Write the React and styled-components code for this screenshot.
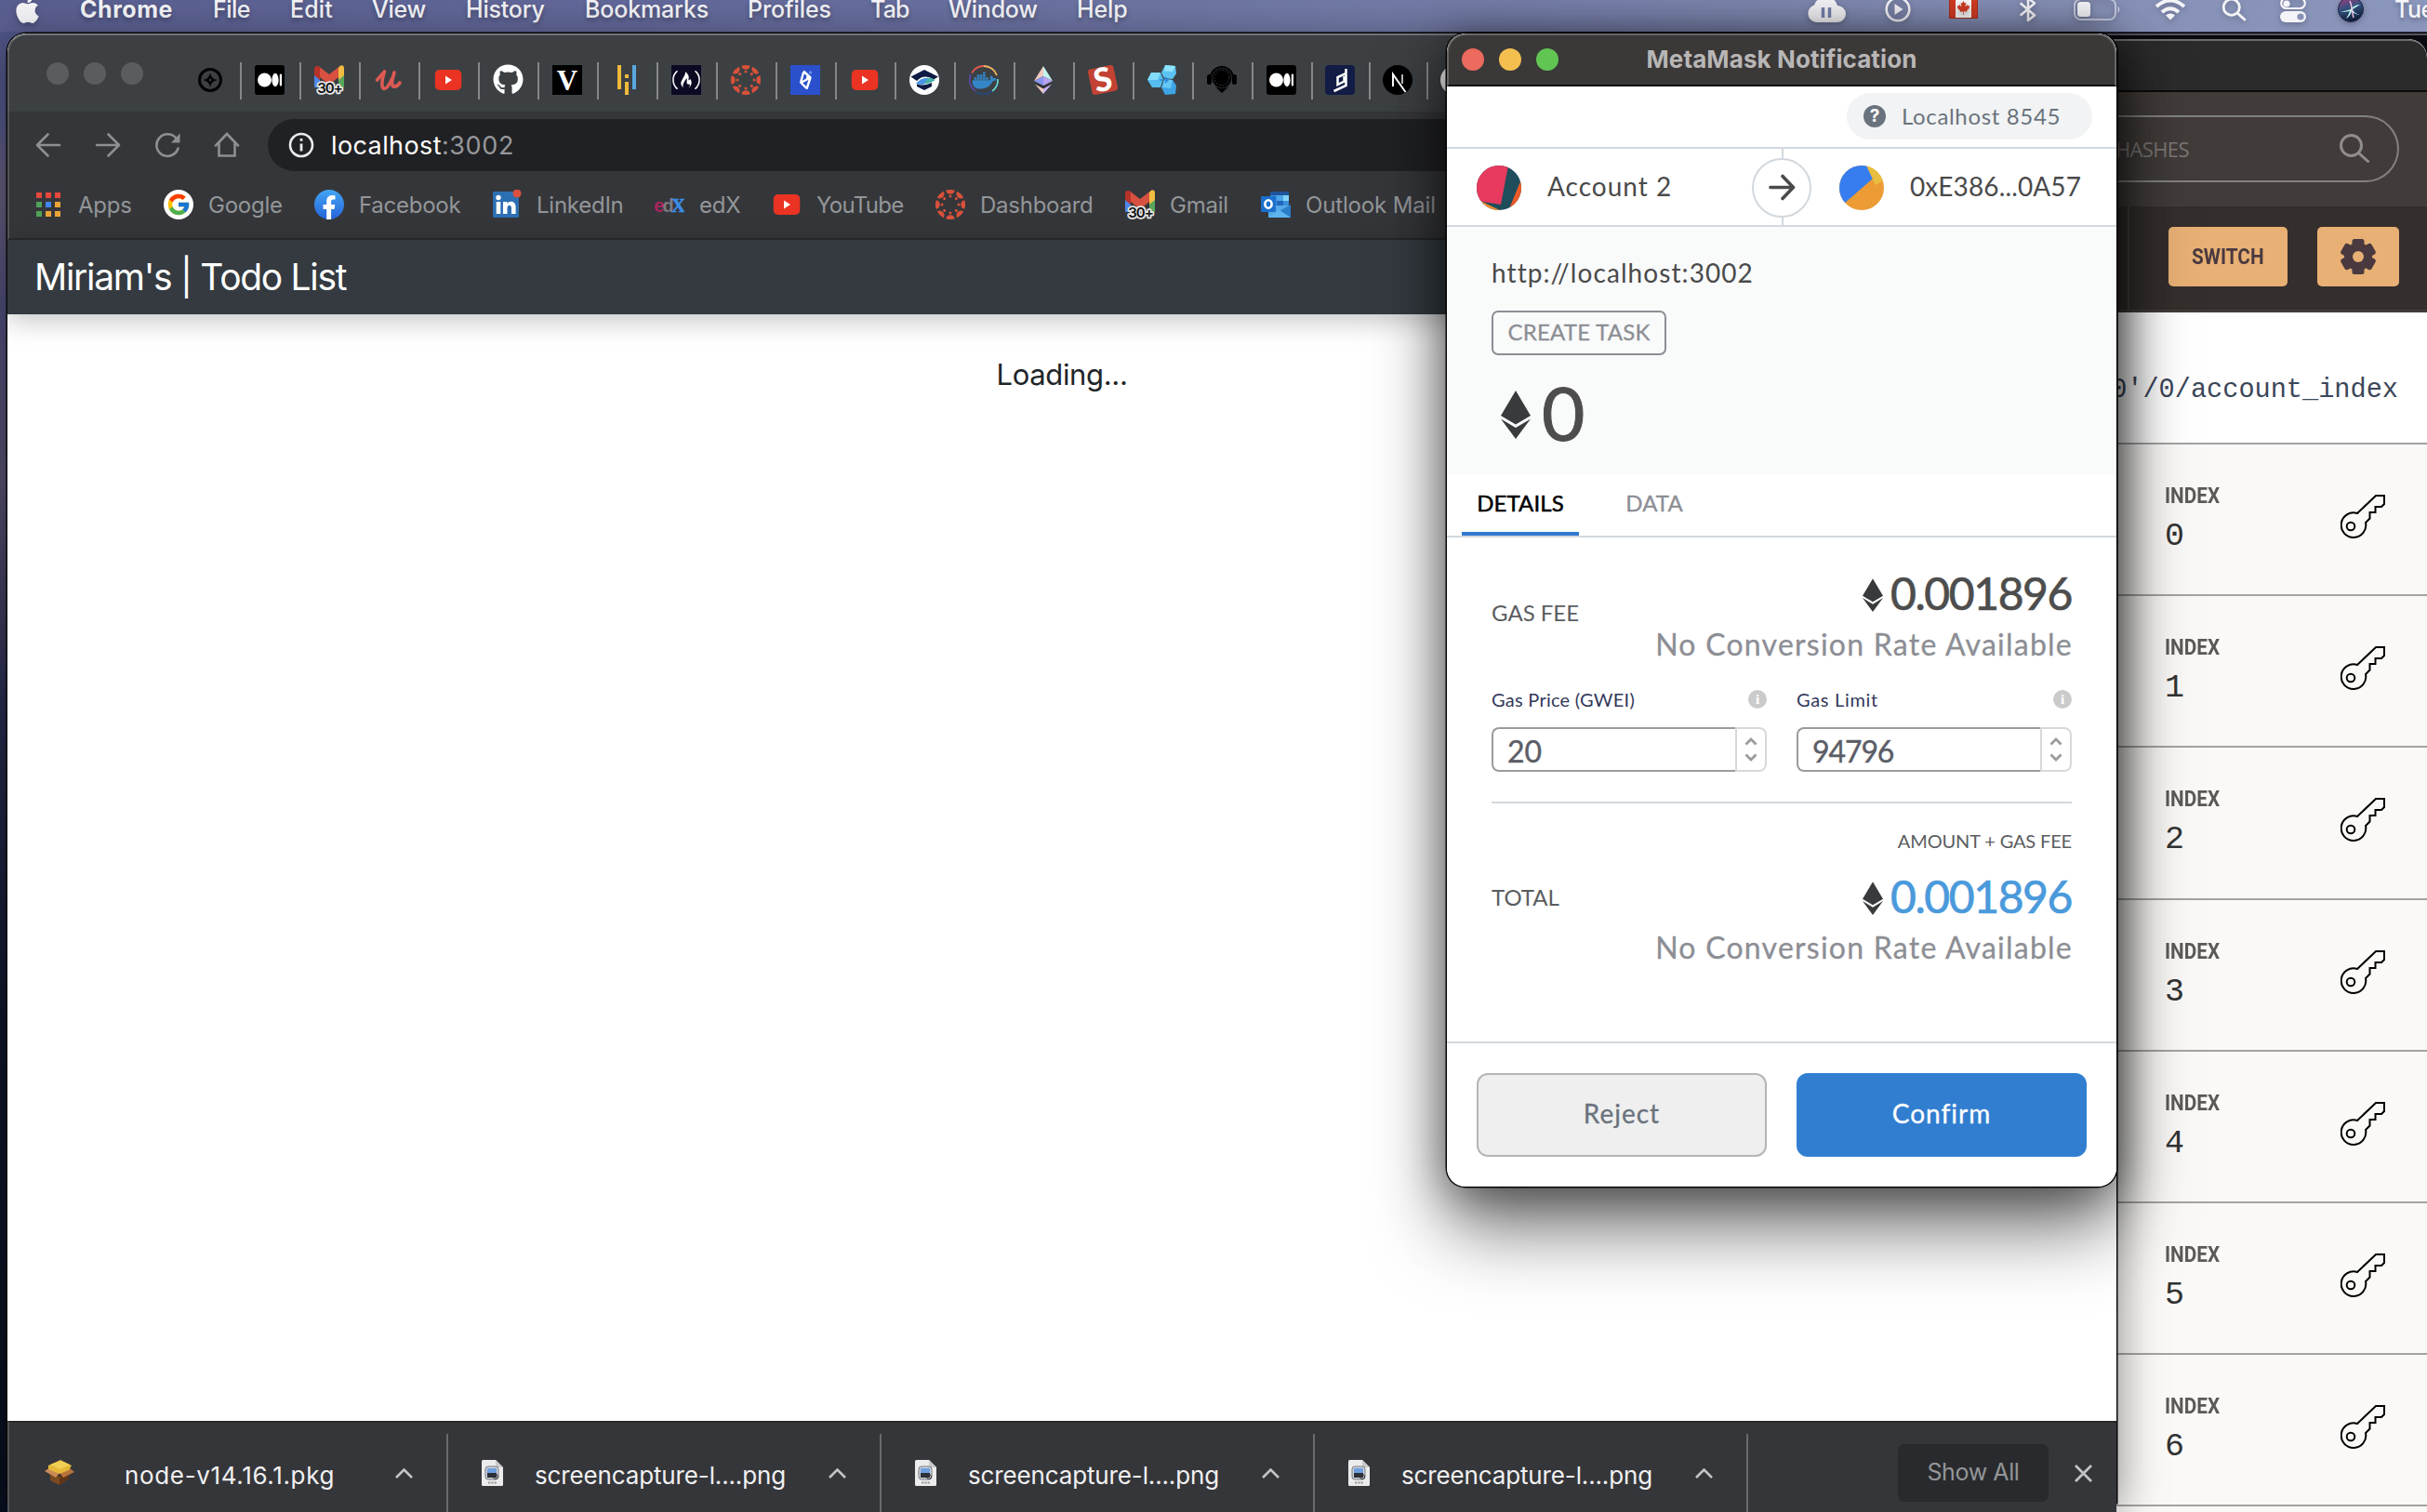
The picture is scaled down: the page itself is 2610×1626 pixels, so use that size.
import React from "react";
import styled, { createGlobalStyle } from "styled-components";
import { FaApple, FaGithub, FaFreeCodeCamp, FaDocker, FaCanadianMapleLeaf } from "react-icons/fa";
import { FcGoogle } from "react-icons/fc";

const UI = `"Inter", "Liberation Sans", sans-serif`;
const EUCLID = `"Lato", "Open Sans", sans-serif`;

const GlobalStyle = createGlobalStyle`
  * { box-sizing: border-box; }
  html, body { margin: 0; overflow: hidden; }
  body { font-family: ${UI}; width: 2610px; height: 1626px; }
  svg { display: block; flex: none; }
`;

/* ---------- Desktop ---------- */
const Desktop = styled.div`
  position: relative;
  width: 2610px;
  height: 1626px;
  overflow: hidden;
  background: linear-gradient(180deg, #4d5486 0, #565a8c 130px, #6a6080 200px, #50507e 330px, #5b5273 520px, #2a2d50 760px, #10162c 1100px, #0a0f20 1626px);
`;
const BackWindow = styled.div`
  position: absolute;
  left: 2200px;
  top: 36px;
  width: 420px;
  height: 1590px;
  background: #0a0a10;
  border-top: 2px solid #55565c;
  box-shadow: 0 0 0 1.5px #08080c;
`;

/* ---------- Menu bar ---------- */
const MenuBar = styled.div`
  position: relative;
  display: flex;
  align-items: center;
  height: 34px;
  padding: 0 0 14px 13px;
  background: linear-gradient(90deg, #5a5f91 0, #646a9b 30%, #737ba7 58%, #8791b7 85%, #8b96bc 100%);
  color: #f4f4f8;
  white-space: nowrap;
`;
const MenuLogo = styled.div`
  width: 73px;
  flex: none;
  svg { filter: drop-shadow(0 3px 3px rgba(0, 0, 0, 0.25)); }
`;
const MenuItem = styled.span`
  flex: none;
  width: ${(p) => p.$width}px;
  font-size: 25px;
  line-height: 20px;
  font-weight: ${(p) => (p.$bold ? 700 : 500)};
  letter-spacing: ${(p) => p.$spacing || 0}px;
  text-shadow: 0 3px 5px rgba(0, 0, 0, 0.3);
`;
const StatusArea = styled.div`
  display: flex;
  align-items: center;
  margin-left: auto;
`;
const StatusSlot = styled.div`
  flex: none;
  width: ${(p) => p.$width}px;
  svg { overflow: visible; filter: drop-shadow(0 2px 3px rgba(0, 0, 0, 0.25)); }
`;
const Flag = styled.div`
  display: flex;
  align-items: center;
  justify-content: center;
  width: 31px;
  height: 24px;
  margin-bottom: 4px;
  color: #d13c23;
  border: 1px solid #a52f1c;
  background: linear-gradient(90deg, #d13c23 0 6px, #fff 6px 23px, #d13c23 23px);
`;

/* ---------- Browser window ---------- */
const Browser = styled.div`
  position: absolute;
  left: 8px;
  top: 36px;
  width: 2268px;
  height: 1590px;
  display: flex;
  flex-direction: column;
  border-radius: 20px 20px 0 0;
  overflow: hidden;
  background: #fff;
`;
const BrowserShadow = styled.div`
  position: absolute;
  left: 8px;
  top: 36px;
  width: 2268px;
  height: 1580px;
  border-radius: 20px 20px 0 0;
  box-shadow: 0 0 0 1.5px #0a0a0c, 0 12px 50px rgba(0, 0, 0, 0.5);
`;
const TabStrip = styled.div`
  display: flex;
  align-items: center;
  flex: none;
  height: 84px;
  padding-left: 40px;
  background: #3c4043;
  border-top: 2px solid #727476;
  border-left: 2px solid #5a5c5e;
  border-radius: 20px 0 0 0;
`;
const Lights = styled.div`
  display: flex;
  gap: 16px;
`;
const Light = styled.i`
  width: 24px;
  height: 24px;
  border-radius: 50%;
  background: ${(p) => p.$color};
`;
const Tabs = styled.div`
  display: flex;
  margin: 15px 0 0 42px;
`;
const Tab = styled.div`
  display: flex;
  align-items: center;
  justify-content: center;
  width: ${(p) => p.$width || 64}px;
  height: 40px;
  padding-right: 2px;
  border-right: 2px solid #85888a;
  svg { margin-top: -2px; }
`;
const Toolbar = styled.div`
  flex: none;
  height: 138px;
  background: #35363a;
  border-left: 2px solid #535458;
  border-bottom: 2px solid #28292b;
`;
const NavRow = styled.div`
  display: flex;
  align-items: center;
  height: 72px;
  padding-left: 10px;
`;
const NavButton = styled.div`
  display: flex;
  justify-content: center;
  width: 64px;
  flex: none;
`;
const Omnibox = styled.div`
  display: flex;
  align-items: center;
  flex: 1;
  height: 56px;
  margin: 0 24px 0 12px;
  padding-left: 22px;
  border-radius: 28px;
  background: #202124;
  color: #fff;
  font-size: 27px;
  letter-spacing: 0.4px;
  svg { margin-right: 18px; }
`;
const Port = styled.span`
  color: #96989b;
  letter-spacing: 0.6px;
`;
const BookmarkRow = styled.div`
  display: flex;
  align-items: center;
  height: 56px;
  padding-left: 26px;
`;
const Bookmark = styled.div`
  display: flex;
  align-items: center;
  flex: none;
  gap: 16px;
  width: ${(p) => p.$width}px;
  color: #939699;
  font-size: 24px;
  letter-spacing: ${(p) => p.$spacing || -0.25}px;
  white-space: nowrap;
`;
const AppsGrid = styled.div`
  display: grid;
  grid-template-columns: repeat(3, 6px);
  gap: 4px;
  width: 32px;
  padding-left: 3px;
`;
const AppsDot = styled.i`
  height: 6px;
  background: ${(p) => p.$color};
`;
const SiteHeader = styled.div`
  flex: none;
  height: 80px;
  padding-left: 29px;
  background: #343a40;
  color: #fff;
  font-size: 39px;
  line-height: 80px;
  letter-spacing: -1.3px;
  box-shadow: 0 8px 28px rgba(0, 0, 0, 0.22);
  position: relative;
`;
const SiteBody = styled.div`
  flex: 1;
  padding-top: 41px;
  text-align: center;
  color: #212529;
  font-size: 31px;
  line-height: 48px;
  letter-spacing: -0.35px;
`;
const Shelf = styled.div`
  display: flex;
  flex: none;
  height: 98px;
  padding-top: 12px;
  border-top: 2px solid #28292b;
  border-left: 2px solid #535458;
  background: #35363a;
`;
const Download = styled.div`
  display: flex;
  align-items: center;
  flex: none;
  width: ${(p) => p.$width}px;
  padding: 0 36px 0 ${(p) => p.$pad}px;
  border-right: 2px solid #6a6b6e;
`;
const FileName = styled.span`
  margin: 5px auto 0 ${(p) => p.$gap}px;
  color: #f1f1f2;
  font-size: 26px;
  letter-spacing: ${(p) => p.$spacing}px;
  white-space: nowrap;
`;
const ShelfEnd = styled.div`
  display: flex;
  align-items: center;
  gap: 28px;
  margin-left: auto;
  padding-right: 26px;
`;
const ShowAll = styled.div`
  width: 162px;
  height: 62px;
  border-radius: 7px;
  background: #292a2d;
  color: #939699;
  font-size: 25px;
  line-height: 60px;
  letter-spacing: -0.4px;
  text-align: center;
`;

/* ---------- Wallet popup ---------- */
const Popup = styled.div`
  position: absolute;
  left: 1556px;
  top: 36px;
  width: 720px;
  height: 1240px;
  display: flex;
  flex-direction: column;
  overflow: hidden;
  border-radius: 20px;
  background: #fff;
  font-family: ${EUCLID};
`;
const PopupShadow = styled.div`
  position: absolute;
  left: 1556px;
  top: 36px;
  width: 720px;
  height: 1240px;
  border-radius: 20px;
  box-shadow: 0 0 0 1.5px #050505, 0 44px 80px rgba(0, 0, 0, 0.56), 0 6px 48px rgba(0, 0, 0, 0.42);
`;
const PopupTitleBar = styled.div`
  display: grid;
  grid-template-columns: 1fr auto 1fr;
  align-items: center;
  flex: none;
  height: 57px;
  padding: 0 14px 1px;
  background: #3b3838;
  border: 2px solid #6a6767;
  border-bottom: 2px solid #0f0f0f;
  border-radius: 20px 20px 0 0;
`;
const PopupTitle = styled.div`
  padding-bottom: 2px;
  color: #b8b6b6;
  font: 700 26px ${UI};
  letter-spacing: 0.1px;
`;
const NetworkBar = styled.div`
  display: flex;
  align-items: center;
  justify-content: flex-end;
  flex: none;
  height: 67px;
  padding: 0 26px 1px 0;
  border-bottom: 2px solid #d2d8dd;
`;
const Network = styled.div`
  display: flex;
  align-items: center;
  gap: 17px;
  width: 264px;
  height: 50px;
  padding: 0 0 1px 18px;
  border-radius: 25px;
  background: #f2f3f4;
  color: #6a737d;
  font-size: 24px;
  letter-spacing: 0.65px;
`;
const RoundBadge = styled.span`
  display: grid;
  place-items: center;
  width: ${(p) => p.$size}px;
  height: ${(p) => p.$size}px;
  border-radius: 50%;
  background: ${(p) => p.$bg};
  color: #fff;
  font: 700 ${(p) => p.$font}px/1 ${(p) => p.$family || UI};
  letter-spacing: 0;
`;
const Accounts = styled.div`
  position: relative;
  display: grid;
  grid-template-columns: 1fr 1fr;
  flex: none;
  height: 84px;
  border-bottom: 2px solid #d2d8dd;
`;
const Account = styled.div`
  display: flex;
  align-items: center;
  gap: 28px;
  padding: 2px 0 0 ${(p) => p.$pad}px;
  border-left: ${(p) => (p.$divided ? "2px solid #d2d8dd" : "0")};
  color: #4a4a4a;
  font-size: 28px;
  letter-spacing: ${(p) => p.$spacing}px;
`;
const AccountName = styled.span`
  padding-bottom: 4px;
`;
const ArrowBadge = styled.div`
  position: absolute;
  left: 328px;
  top: 10px;
  display: grid;
  place-items: center;
  width: 64px;
  height: 64px;
  border: 2px solid #d2d8dd;
  border-radius: 50%;
  background: #fff;
`;
const Summary = styled.div`
  flex: none;
  height: 266px;
  padding: 32px 48px 0;
  background: #f9fafa;
`;
const Origin = styled.div`
  color: #4a4a4a;
  font-size: 28px;
  line-height: 34px;
  letter-spacing: 1.08px;
  font-variant-ligatures: none;
`;
const Action = styled.div`
  width: 188px;
  height: 48px;
  margin-top: 24px;
  border: 2px solid #8c8e94;
  border-radius: 7px;
  color: #8c8e94;
  font-size: 24px;
  line-height: 42px;
  letter-spacing: 0.22px;
  text-align: center;
  -webkit-text-stroke: 0.3px #8c8e94;
`;
const BigAmount = styled.div`
  display: flex;
  align-items: center;
  gap: 12px;
  height: 70px;
  margin-top: 26px;
  padding-left: 10px;
  color: #4d4d4d;
  font-size: 80px;
  line-height: 70px;
  -webkit-text-stroke: 1px #4d4d4d;
  svg { margin-top: 6px; }
`;
const TabBar = styled.div`
  display: flex;
  flex: none;
  height: 68px;
  padding-left: 16px;
  border-bottom: 2px solid #d2d8dd;
`;
const PopupTab = styled.div`
  width: ${(p) => p.$width}px;
  border-bottom: 4px solid ${(p) => (p.$active ? "#3179d0" : "transparent")};
  color: ${(p) => (p.$active ? "#000" : "#8c8e94")};
  -webkit-text-stroke: ${(p) => (p.$active ? "0.5px #000" : "0.3px #8c8e94")};
  font-size: 24px;
  line-height: 62px;
  letter-spacing: 0.1px;
  text-align: center;
`;
const Details = styled.div`
  flex: 1;
  padding: 31px 48px 0;
`;
const FeeRow = styled.div`
  display: flex;
  justify-content: space-between;
  margin-top: ${(p) => p.$top || 0}px;
`;
const FeeLabel = styled.div`
  margin-top: ${(p) => p.$top}px;
  color: #5b5d5f;
  font-size: 24px;
  line-height: 30px;
`;
const FeeValues = styled.div`
  display: flex;
  flex-direction: column;
  align-items: flex-end;
`;
const Fee = styled.div`
  display: flex;
  align-items: center;
  gap: 8px;
  height: 56px;
  padding-top: 2px;
  color: ${(p) => p.$color};
  font-size: 48px;
  line-height: 56px;
  letter-spacing: -1.4px;
  -webkit-text-stroke: 0.7px ${(p) => p.$color};
  svg { margin-top: 3px; }
`;
const Conversion = styled.div`
  height: 40px;
  margin-top: 6px;
  color: #8c8e94;
  font-size: 32px;
  line-height: 43px;
  letter-spacing: 1.24px;
  margin-right: -1px;
  -webkit-text-stroke: 0.3px #8c8e94;
`;
const Fields = styled.div`
  display: grid;
  grid-template-columns: 1fr 1fr;
  gap: 32px;
  margin-top: 29px;
  padding-bottom: 32px;
  border-bottom: 2px solid #d2d8dd;
`;
const FieldHead = styled.div`
  display: flex;
  align-items: center;
  justify-content: space-between;
  height: 24px;
  margin-bottom: 18px;
  color: #33395a;
  font-size: 20px;
  letter-spacing: ${(p) => p.$spacing}px;
`;
const NumberField = styled.div`
  display: flex;
  height: 48px;
`;
const NumberValue = styled.div`
  flex: 1;
  padding-left: 15px;
  border: 2px solid #9b9b9b;
  border-right: 0;
  border-radius: 8px 0 0 8px;
  color: #5b5d67;
  font-size: 32px;
  line-height: 48px;
  letter-spacing: ${(p) => p.$spacing}px;
  -webkit-text-stroke: 0.4px #5b5d67;
`;
const Stepper = styled.div`
  display: flex;
  flex-direction: column;
  align-items: center;
  justify-content: space-evenly;
  width: 34px;
  border: 2px solid #d9d9d9;
  border-radius: 0 8px 8px 0;
`;
const TotalNote = styled.div`
  margin-top: 28px;
  color: #5b5d5f;
  font-size: 20px;
  line-height: 24px;
  letter-spacing: -0.15px;
  text-align: right;
`;
const Footer = styled.div`
  display: grid;
  grid-template-columns: 1fr 1fr;
  gap: 32px;
  flex: none;
  height: 156px;
  padding: 32px;
  border-top: 2px solid #d2d8dd;
`;
const Button = styled.div`
  height: 90px;
  border: 2px solid ${(p) => (p.$primary ? "#317fd2" : "#b5b5b5")};
  border-radius: 12px;
  background: ${(p) => (p.$primary ? "#317ed0" : "#efefef")};
  color: ${(p) => (p.$primary ? "#fff" : "#6a737d")};
  font-size: 28px;
  line-height: 83px;
  letter-spacing: 1px;
  text-align: center;
  -webkit-text-stroke: 0.3px currentColor;
`;

/* ---------- Ledger window ---------- */
const Ledger = styled.div`
  position: absolute;
  left: 2240px;
  top: 42px;
  width: 370px;
  height: 1584px;
  overflow: hidden;
  border-radius: 0 20px 0 0;
  background: #faf9f7;
`;
const LedgerTitle = styled.div`
  height: 57px;
  background: #2b2b2b;
  border-top: 2px solid #6c6c6c;
  border-bottom: 2px solid #0d0b0a;
  border-radius: 0 20px 0 0;
`;
const LedgerTop = styled.div`
  height: 123px;
  padding: 25px 30px 0 0;
  background: #413c39;
`;
const SearchPill = styled.div`
  display: flex;
  align-items: center;
  justify-content: space-between;
  height: 72px;
  padding: 0 30px 0 35px;
  border: 2px solid #828282;
  border-left: 0;
  border-radius: 0 36px 36px 0;
  color: #7b7876;
  font: 400 22px "Open Sans", sans-serif;
  letter-spacing: -0.65px;
`;
const LedgerActions = styled.div`
  display: flex;
  justify-content: flex-end;
  gap: 32px;
  height: 111px;
  margin-left: 48px;
  padding: 22px 30px 0 0;
  border-left: 2px solid #46413e;
`;
const ActionsBg = styled.div`
  background: #342f2d;
  border-bottom: 3px solid #413c39;
`;
const LedgerButton = styled.div`
  display: grid;
  place-items: center;
  width: ${(p) => p.$width}px;
  height: 64px;
  border-radius: 5px;
  background: #e8b074;
  color: #4a3a3f;
`;
const Narrow = styled.span`
  display: block;
  font: 700 24px/30px "Roboto", sans-serif;
  transform: scaleX(0.865);
  transform-origin: ${(p) => p.$origin || "center"};
`;
const PathRow = styled.div`
  height: 142px;
  padding: 46px 31px 0 0;
  border-bottom: 2px solid #a4a3a2;
  background: #fff;
  color: #3c4659;
  font: 400 28.6px/76px "Liberation Mono", monospace;
  text-align: right;
  white-space: nowrap;
`;
const IndexRow = styled.div`
  display: flex;
  justify-content: space-between;
  height: 163.2px;
  padding: 40px 45px 0 88px;
  border-bottom: 2px solid #a4a3a2;
  color: #5c5957;
`;
const IndexValue = styled.div`
  margin-top: 9px;
  color: #333;
  font: 400 35px/40px "Liberation Mono", monospace;
`;
const KeySlot = styled.div`
  padding-top: 14px;
`;

/* ---------- Icons ---------- */
const Eth = ({ w, h }) => (
  <svg width={w} height={h} viewBox="0 0 32 52" fill="#383a3c">
    <path d="M16 0 32 27 16 36.500 0 27z" />
    <path d="M0 30.500 16 40 32 30.500 16 52z" />
  </svg>
);
const Gmail = () => (
  <svg width="32" height="32" viewBox="0 0 32 32">
    <path d="M0 6h6v18H0z" fill="#4f86ec" />
    <path d="M26 6h6v18h-6z" fill="#58a55c" />
    <path d="M26 3q6-6 6 3v5l-6 5z" fill="#f2bd42" />
    <path d="M0 5q0-6 6-3v14L0 11z" fill="#b5332a" />
    <path d="M3 0 16 10 29 0l-3 13-10 8L6 13V2z" fill="#d85140" />
    <path d="M26 3q3-4 5.500-1.500L32 8l-6 5z" fill="#f2bd42" />
    <text x="16.500" y="30" textAnchor="middle" fontFamily="Inter, sans-serif" fontWeight="600" fontSize="15" letterSpacing="-1" fill="#111" stroke="#e6e6e6" strokeWidth="3.500" paintOrder="stroke" strokeLinejoin="round">30+</text>
  </svg>
);
const Medium = () => (
  <svg width="32" height="32" viewBox="0 0 32 32">
    <rect width="32" height="32" rx="3" fill="#000" />
    <g fill="#fff"><circle cx="10.500" cy="16" r="7.500" /><ellipse cx="22" cy="16" rx="3.600" ry="7.200" /><rect x="26.800" y="9.500" width="2.200" height="13" rx="1.100" /></g>
  </svg>
);
const YouTube = () => (
  <svg width="32" height="32" viewBox="0 0 32 32">
    <rect x="1.800" y="5" width="28.500" height="22" rx="5" fill="#ea3323" />
    <path d="m13 11.500 7 4.500-7 4.500z" fill="#fff" />
  </svg>
);
const Canvas = () => (
  <svg width="32" height="32" viewBox="0 0 32 32" fill="#d9513a">
    {[0, 45, 90, 135, 180, 225, 270, 315].map((a) => (
      <g key={a} transform={`rotate(${a} 16 16)`}>
        <path d="M11.200 .75A16 16 0 0 1 20.800 .75A4.900 4.900 0 0 1 11.200 .75z" />
        <circle cx="16" cy="7" r="1.500" />
      </g>
    ))}
  </svg>
);
const Compass = () => (
  <svg width="28" height="28" viewBox="0 0 28 28">
    <circle cx="14" cy="14" r="11.500" fill="none" stroke="#000" strokeWidth="3" />
    <path d="M14 6q1 7 8 8-7 1-8 8-1-7-8-8 7-1 8-8z" fill="#000" />
    <circle cx="14" cy="14" r="1.300" fill="#3c4043" />
  </svg>
);
const Udemy = () => (
  <svg width="32" height="32" viewBox="0 0 32 32" fill="none" stroke="#dc5a52" strokeWidth="3.600" strokeLinecap="round" strokeLinejoin="round">
    <path d="M3.500 16Q9 10 11.500 7 7.500 19 9.500 24.500q4 4 11-11.500L22 8q-4 13-1 15 4 1 7-4" />
  </svg>
);
const Letter = ({ bg, color, children, family = "Liberation Serif, serif", size = 30, weight = 700, round = 0, tilt = 0 }) => (
  <svg width="32" height="32" viewBox="0 0 32 32" overflow="visible">
    <g transform={`rotate(${tilt} 16 16)`}>
      <rect x={tilt ? 2 : 0} y={tilt ? 2 : 0} width={tilt ? 28 : 32} height={tilt ? 28 : 32} rx={round} fill={bg} />
      <text x="16" y={16 + size * 0.34} textAnchor="middle" fill={color} fontFamily={family} fontSize={size} fontWeight={weight}>{children}</text>
    </g>
  </svg>
);
const Bars = () => (
  <svg width="32" height="32" viewBox="0 0 32 32">
    <path d="M6 0h4v26H6zM14 10h4v4h-4zM14 18h4v14h-4z" fill="#f0b93a" />
    <path d="M22 0h4v26h-4z" fill="#58a9df" />
  </svg>
);
const FreeCode = () => (
  <svg width="32" height="32" viewBox="0 0 32 32">
    <rect width="32" height="32" fill="#0a0a23" />
    <FaFreeCodeCamp x="1" y="1" size={30} color="#fff" />
  </svg>
);
const Toptal = () => (
  <svg width="32" height="32" viewBox="0 0 32 32">
    <rect width="32" height="32" fill="#2a50cc" />
    <path d="M14 6.500 21.500 13.500 11 19m7 6.500L11 18.500M17 13.500 21.500 13.500 17.500 25.500M14 8 11 19" fill="none" stroke="#fff" strokeWidth="2.400" strokeLinejoin="round" />
    <circle cx="21.500" cy="8" r="1.700" fill="#6f8be4" />
  </svg>
);
const Grad = () => (
  <svg width="32" height="32" viewBox="0 0 32 32">
    <circle cx="16" cy="16" r="16" fill="#fff" />
    <path d="M16 5 31 12.500l-5 3Q16 9 8 17L1.500 12.500z" fill="#0d1b45" />
    <path d="M7 20q9-10 21-4-9 6-21 4z" fill="#45b3a6" />
    <path d="M7 20q6-7 13-6l-5 7q-5 0-8-1z" fill="#4b93e6" />
    <path d="M8 20.500q8 2.500 16-1.500v4l-8 4-8-4z" fill="#0d1b45" />
  </svg>
);
const DockerRing = () => (
  <svg width="32" height="32" viewBox="0 0 32 32" fill="none">
    <g strokeWidth="1.800">
      <path d="M3 8.500A15 15 0 0 1 16 1" stroke="#e55a50" />
      <path d="M16 1a15 15 0 0 1 14 10" stroke="#f3b45f" />
      <path d="M31 15a15 15 0 0 1-6 13" stroke="#63d6cf" />
      <path d="M25 28A15 15 0 0 1 8 29" stroke="#27477a" />
      <path d="M7 28A15 15 0 0 1 2 10" stroke="#5a47a5" />
    </g>
    <FaDocker x="3.500" y="3.500" size={26} color="#3486c8" />
  </svg>
);
const EthColor = () => (
  <svg width="32" height="32" viewBox="0 0 32 32">
    <path d="M16 1 6 17l10-5z" fill="#efc9bd" /><path d="m16 1 10 16-10-5z" fill="#c3f3ee" />
    <path d="m6 17 10-5v10z" fill="#8a96ee" /><path d="m26 17-10-5v10z" fill="#b9a3f0" />
    <path d="m6.500 19 9.500 5.500 9.500-5.500L16 23z" fill="#26282f" />
    <path d="m7 20.500 9 5V31z" fill="#efc9bd" /><path d="m25 20.500-9 5V31z" fill="#c9b4f6" />
  </svg>
);
const Cubes = () => (
  <svg width="32" height="32" viewBox="0 0 32 32">
    <path d="m19 0 11 1 1 8-4 6-9-1-3-6z" fill="#5cc4f2" /><path d="m19 0 11 1-3 6-9-.5z" fill="#8fe3fb" />
    <path d="M4 8h10l3 7-3 9H5l-5-8z" fill="#55bdf0" /><path d="M4 8h10l-3 8H0z" fill="#83dcf9" />
    <path d="m18 15 9 1 4 6-1 9-11 1-4-8z" fill="#3fa4e4" /><path d="m18 15 9 1-2 9-9-1z" fill="#66c8f4" />
    <path d="M13 16h9m-3-3 3 3-3 3" stroke="#2d86d6" strokeWidth="1.600" fill="none" />
  </svg>
);
const Headset = () => (
  <svg width="32" height="32" viewBox="0 0 32 32">
    <path d="M4 14A12 12 0 0 1 28 14" fill="none" stroke="#000" strokeWidth="2" />
    <circle cx="16" cy="14" r="10.500" /><circle cx="16" cy="13.500" r="8.200" fill="none" stroke="#33373a" strokeWidth="1" strokeDasharray="2 1.500" />
    <rect x="0" y="10" width="5" height="11" rx="2.500" /><rect x="27" y="10" width="5" height="11" rx="2.500" />
    <path d="M8.500 23q7.500 4 15 0L16 30z" />
  </svg>
);
const Hash = () => (
  <svg width="32" height="32" viewBox="0 0 32 32">
    <rect width="32" height="32" rx="4" fill="#121c45" />
    <path d="M22.500 4v5l-9 4v8l7-3.500V12m2-2v12l-13 6" fill="none" stroke="#fff" strokeWidth="2.500" />
  </svg>
);
const NextJs = () => (
  <svg width="32" height="32" viewBox="0 0 32 32">
    <circle cx="16" cy="16" r="16" fill="#000" />
    <path d="M11 23V10l13.500 19" fill="none" stroke="#fff" strokeWidth="2" /><path d="M21 10v10" stroke="#bbb" strokeWidth="2" />
  </svg>
);
const Disc = () => (
  <svg width="32" height="32" viewBox="0 0 32 32"><circle cx="16" cy="16" r="16" fill="#f3f3f3" /></svg>
);
const GoogleIcon = () => (
  <svg width="32" height="32" viewBox="0 0 32 32"><circle cx="16" cy="16" r="16" fill="#fff" /><FcGoogle x="2.500" y="2.500" size={27} /></svg>
);
const Facebook = () => (
  <svg width="32" height="32" viewBox="0 0 32 32">
    <defs><linearGradient id="fb" x2="0" y2="1"><stop stopColor="#43a6f5" /><stop offset="1" stopColor="#2563d8" /></linearGradient></defs>
    <circle cx="16" cy="16" r="16" fill="url(#fb)" />
    <path d="M13.200 32V21H9.500v-5h3.700v-3.600c0-4.200 2.500-6.400 6.200-6.400l3.100.3v4.300h-2c-1.900 0-2.400 1.100-2.400 2.400V16h4.200l-.8 5h-3.400v11z" fill="#fff" />
  </svg>
);
const LinkedIn = () => (
  <svg width="32" height="32" viewBox="0 0 32 32">
    <rect x="1" y="2" width="28" height="28" rx="1.500" fill="#2c6fb3" />
    <g fill="#fff"><circle cx="7" cy="8.500" r="2.700" /><path d="M4.700 13h4.600v13H4.700zM12 13h4.400v2c2-3.400 9.200-3.300 9.200 3.500V26H21v-6.500c0-4-4.500-3.600-4.500 0V26H12z" /></g>
    <circle cx="27" cy="4" r="4.500" fill="#d9513f" />
  </svg>
);
const Edx = () => (
  <svg width="32" height="32" viewBox="0 0 32 32" fontFamily="Liberation Sans, sans-serif" fontWeight="700">
    <text x="-1" y="24" fontSize="21" fill="#a8245f">e</text>
    <text x="8.500" y="24" fontSize="20" fill="#7a7b80">d</text>
    <text x="18" y="24" fontSize="21" fontFamily="Liberation Serif, serif" fill="#3a8ee6" stroke="#3a8ee6" strokeWidth="0.600">X</text>
  </svg>
);
const Outlook = () => (
  <svg width="32" height="32" viewBox="0 0 32 32">
    <path d="M10 2h20v16H10z" fill="#3a8fdc" /><path d="M10 2h20v4H10z" fill="#1f559b" />
    <path d="M17 6h7v6h-7z" fill="#4ca5ea" /><path d="M24 6h6v6h-6z" fill="#7fd4f8" /><path d="M17 12h7v6h-7z" fill="#1f66bd" />
    <path d="M8 17h24v13H8z" fill="#54aae8" /><path d="M20 23 32 16v14z" fill="#2b7cc9" /><path d="m8 30 12-8 12 8z" fill="#5db4ef" />
    <rect x="0" y="7" width="16" height="17" rx="1" fill="#1c6fcb" />
    <ellipse cx="8" cy="15.500" rx="3.600" ry="4.200" fill="none" stroke="#fff" strokeWidth="2.600" />
  </svg>
);
const line = { fill: "none", stroke: "#8d8f92", strokeWidth: 2.6, strokeLinecap: "round", strokeLinejoin: "round" };
const Back = () => <svg width="28" height="28" viewBox="0 0 28 28" {...line}><path d="M26 14H2.500M13.500 2.500 2 14l11.500 11.500" /></svg>;
const Forward = () => <svg width="28" height="28" viewBox="0 0 28 28" {...line}><path d="M2 14h23.500M14.500 2.500 26 14 14.500 25.500" /></svg>;
const Reload = () => (
  <svg width="28" height="28" viewBox="0 0 28 28" {...line}><path d="M25.500 17.500A11.800 11.800 0 1 1 24 7.500" /><path d="M27.500 1.500v10H18z" fill="#8d8f92" stroke="none" /></svg>
);
const Home = () => <svg width="28" height="28" viewBox="0 0 28 28" {...line}><path d="M2 14.500 14 2l12 12.500M5.500 12.500V25.500h17V12.500" strokeLinejoin="miter" /></svg>;
const Info = () => (
  <svg width="28" height="28" viewBox="0 0 28 28"><circle cx="14" cy="14" r="12" fill="none" stroke="#e8eaed" strokeWidth="2.600" /><path d="M14 12.500v8M14 7v2.800" stroke="#e8eaed" strokeWidth="2.800" /></svg>
);
const Caret = () => <svg width="19" height="11" viewBox="0 0 19 11" fill="none" stroke="#c3c4c6" strokeWidth="2.600"><path d="m1 10 8.500-8.500L18 10" /></svg>;
const Cross = () => <svg width="19" height="19" viewBox="0 0 19 19" fill="none" stroke="#c3c4c6" strokeWidth="2.800"><path d="m1 1 17 17M18 1 1 18" /></svg>;
const Package = () => (
  <svg width="32" height="32" viewBox="0 0 32 32">
    <path d="m6 16 10 4 10-4v6l-10 7-10-5z" fill="#7a4a20" /><path d="m16 19 10-3v6l-10 7z" fill="#5f3515" />
    <path d="m0 14 6-4 10 6-4 5z" fill="#c98a55" /><path d="m32 15-6-5-10 6 4 5z" fill="#b9733d" />
    <path d="M4 8 17 2l12 6-3 5-10 4-12-5z" fill="#e6b83a" /><path d="m6 7 11-4 10 4-10 5z" fill="#f1cf55" />
  </svg>
);
const PngFile = () => (
  <svg width="24" height="28" viewBox="0 0 24 28">
    <path d="M0 1.500Q0 0 1.500 0H15l8 8v18.500q0 1.500-1.500 1.500h-20Q0 28 0 26.500z" fill="#ececec" />
    <path d="M15 0v8h8z" fill="#c9c9c9" />
    <rect x="4" y="7" width="14" height="14" rx="3" fill="#cfd2d8" stroke="#777b83" />
    <path d="M6 9h10v5H6z" fill="#6e9fe0" /><path d="M6 14h10v5H6z" fill="#2c3038" /><circle cx="15" cy="18" r="2.500" fill="none" stroke="#333" />
    <path d="M7 24.500h9" stroke="#999" strokeWidth="2" strokeDasharray="2.300 1" />
  </svg>
);
const Arrow = () => <svg width="30" height="30" viewBox="0 0 30 30" fill="none" stroke="#4a4a4a" strokeWidth="3.600" strokeLinecap="round" strokeLinejoin="round"><path d="M3 14.500h23M16 2.500 27.500 14.500 16 26.500" /></svg>;
const Step = ({ down }) => <svg width="14" height="9" viewBox="0 0 14 9" fill="none" stroke="#9b9b9b" strokeWidth="2.800"><path d={down ? "m1.500 1.500 5.500 5.500 5.500-5.500" : "M1.500 7.500 7 2l5.500 5.500"} /></svg>;
const Avatar = ({ alt }) => (
  <svg width="48" height="48" viewBox="0 0 48 48">
    <clipPath id={alt ? "av2" : "av1"}><circle cx="24" cy="24" r="24" /></clipPath>
    {alt ? (
      <g clipPath="url(#av2)"><rect width="48" height="48" fill="#ec9b35" /><path d="M0 0h30l6 14L5 41-2 46z" fill="#377df0" /><path d="m29 0 10 21 9-5V0z" fill="#e9bd3e" /></g>
    ) : (
      <g clipPath="url(#av1)"><rect width="48" height="48" fill="#1f4d5c" /><path d="M0 0h34l-8 42L0 38z" fill="#e73a5e" /><path d="M50 10 36 44l14 4z" fill="#ec5b27" /><path d="m6 39 21 10H0z" fill="#f08a2b" /></g>
    )}
  </svg>
);
const KeyIcon = () => (
  <svg width="48" height="48" viewBox="0 0 48 48" fill="none" stroke="#000" strokeWidth="2">
    <path d="M18 20 38 1h9v9l-3 3h-6.500v6h-6v6.500L27 30a13.300 13.300 0 1 1-9-10z" /><circle cx="11" cy="34" r="4.300" />
  </svg>
);
const Gear = () => (
  <svg width="38" height="38" viewBox="0 0 38 38" fill="#4a3a3f">
    <circle cx="19" cy="19" r="15" />
    {[0, 60, 120].map((a) => <rect key={a} x="12.500" y="0" width="13" height="38" rx="2.500" transform={`rotate(${a} 19 19)`} />)}
    <circle cx="19" cy="19" r="6" fill="#e8b074" />
  </svg>
);
const Magnifier = ({ size, color, width }) => (
  <svg width={size} height={size} viewBox="0 0 32 32" fill="none" stroke={color} strokeWidth={width} strokeLinecap="round"><circle cx="12.500" cy="12.500" r="11" /><path d="m21 21 9.500 8.500" /></svg>
);
const Cloud = () => (
  <svg width="42" height="30" viewBox="0 0 42 30"><path d="M10 29a9.500 9.500 0 0 1-2-18.500A13 13 0 0 1 33 11a9 9 0 0 1 0 18z" fill="#f4f4f8" /><path d="M17.500 13v11M24.500 13v11" stroke="#7781ab" strokeWidth="3.500" /></svg>
);
const Play = () => (
  <svg width="28" height="28" viewBox="0 0 28 28"><circle cx="14" cy="14" r="12.300" fill="none" stroke="#f4f4f8" strokeWidth="2.600" /><path d="m10.500 8 9 6-9 6z" fill="#f4f4f8" /></svg>
);
const Bluetooth = () => (
  <svg width="18" height="26" viewBox="0 0 18 26" fill="none" stroke="#f4f4f8" strokeWidth="2.600" strokeLinejoin="round" strokeLinecap="round"><path d="M1.500 7 16 19.500 9 25V1l7 5.500L1.500 19" /></svg>
);
const Battery = () => (
  <svg width="52" height="25" viewBox="0 0 52 25"><rect x="1" y="1" width="44" height="22" rx="6.500" fill="none" stroke="#c3c8dc" strokeWidth="2" /><rect x="4" y="4" width="14" height="16" rx="3.500" fill="#f4f4f8" /><path d="M47.500 8.500q4 3.500 0 7.500z" fill="#c3c8dc" /></svg>
);
const Wifi = () => (
  <svg width="34" height="24" viewBox="0 0 34 24" fill="none" stroke="#f4f4f8" strokeWidth="4"><path d="M2 9q15-13 30 0M8 15q9-7.500 18 0" /><path d="m17 23.500-5-5q5-4 10 0z" fill="#f4f4f8" stroke="none" /></svg>
);
const Toggles = () => (
  <svg width="28" height="28" viewBox="0 0 28 28"><rect x="1.200" y="2" width="25.600" height="11" rx="5.500" fill="none" stroke="#f4f4f8" strokeWidth="2.200" /><circle cx="7" cy="8" r="3.600" fill="#f4f4f8" /><rect y="16" width="28" height="12" rx="6" fill="#f4f4f8" /><circle cx="22" cy="22" r="3.600" fill="#8791b7" /></svg>
);
const Siri = () => (
  <svg width="28" height="28" viewBox="0 0 28 28">
    <defs><linearGradient id="siri" x2="0.300" y2="1"><stop stopColor="#b23a7c" /><stop offset="0.500" stopColor="#35507f" /><stop offset="1" stopColor="#12203c" /></linearGradient></defs>
    <circle cx="14" cy="14" r="13.500" fill="url(#siri)" stroke="#23284a" />
    <path d="M3 17q8-2 11-3 4-5 10-5-5 3-8 5 1 4 8 6-7-1-9-4-2 6-6 8 3-5 4-8-5 1-10 1z" fill="#b8f3ea" /><path d="M13 5q2 4 2 8 1 6 2 10" stroke="#f0c3e4" strokeWidth="1.500" fill="none" />
  </svg>
);

/* ---------- Content ---------- */
const menus = [
  ["Chrome", 143, 0.55, true], ["File", 83, -0.5], ["Edit", 88, 0.1], ["View", 101, -0.3], ["History", 128, -0.2],
  ["Bookmarks", 175, -0.15], ["Profiles", 132, -0.1], ["Tab", 84, -0.8], ["Window", 138, -0.25], ["Help", 60, -0.1],
];
const tabIcons = [
  <Compass />, <Medium />, <Gmail />, <Udemy />, <YouTube />, <FaGithub size={33} color="#fff" />,
  <Letter bg="#000" color="#fff" size={31}>V</Letter>, <Bars />, <FreeCode />, <Canvas />, <Toptal />, <YouTube />,
  <Grad />, <DockerRing />, <EthColor />,
  <Letter bg="#c24233" color="#fff" size={35} weight={900} family="Lato, sans-serif" round={3} tilt={-12}>S</Letter>,
  <Cubes />, <Headset />, <Medium />, <Hash />, <NextJs />, <Disc />,
];
const R = "#e8483c", Gn = "#4fa35a", Bl = "#4285f4", Or = "#eca437";
const AppsIcon = () => (
  <AppsGrid>{[R, R, R, Gn, Bl, Or, Gn, Or, Or].map((c, i) => <AppsDot key={i} $color={c} />)}</AppsGrid>
);
const bookmarks = [
  ["Apps", 140, <AppsIcon />], ["Google", 162, <GoogleIcon />], ["Facebook", 191, <Facebook />], ["LinkedIn", 175, <LinkedIn />],
  ["edX", 126, <Edx />], ["YouTube", 176, <YouTube />, -0.7], ["Dashboard", 204, <Canvas />], ["Gmail", 146, <Gmail />], ["Outlook Mail", 200, <Outlook />, -0.15],
];

export default function App() {
  return (
    <Desktop>
      <GlobalStyle />
      <MenuBar>
        <MenuLogo><FaApple size={33} /></MenuLogo>
        {menus.map(([label, width, spacing, bold]) => (
          <MenuItem key={label} $width={width} $spacing={spacing} $bold={bold}>{label}</MenuItem>
        ))}
        <StatusArea>
          <StatusSlot $width={84}><Cloud /></StatusSlot>
          <StatusSlot $width={69}><Play /></StatusSlot>
          <StatusSlot $width={76}><Flag><FaCanadianMapleLeaf size={15} /></Flag></StatusSlot>
          <StatusSlot $width={58}><Bluetooth /></StatusSlot>
          <StatusSlot $width={87}><Battery /></StatusSlot>
          <StatusSlot $width={73}><Wifi /></StatusSlot>
          <StatusSlot $width={62}><Magnifier size={25} color="#f4f4f8" width={3.6} /></StatusSlot>
          <StatusSlot $width={62}><Toggles /></StatusSlot>
          <StatusSlot $width={61}><Siri /></StatusSlot>
          <MenuItem $width={35} $spacing={-0.5}>Tue</MenuItem>
        </StatusArea>
      </MenuBar>

      <BackWindow />
      <Ledger>
        <LedgerTitle />
        <LedgerTop>
          <SearchPill>HASHES<Magnifier size={32} color="#8f8e8d" width={3} /></SearchPill>
        </LedgerTop>
        <ActionsBg>
          <LedgerActions>
            <LedgerButton $width={128}><Narrow>SWITCH</Narrow></LedgerButton>
            <LedgerButton $width={88}><Gear /></LedgerButton>
          </LedgerActions>
        </ActionsBg>
        <PathRow>0'/0/account_index</PathRow>
        {[0, 1, 2, 3, 4, 5, 6].map((n) => (
          <IndexRow key={n}>
            <div>
              <Narrow $origin="left">INDEX</Narrow>
              <IndexValue>{n}</IndexValue>
            </div>
            <KeySlot><KeyIcon /></KeySlot>
          </IndexRow>
        ))}
      </Ledger>

      <BrowserShadow />
      <Browser>
        <TabStrip>
          <Lights>{[0, 1, 2].map((i) => <Light key={i} $color="#5a5d60" />)}</Lights>
          <Tabs>{tabIcons.map((icon, i) => <Tab key={i} $width={i > 18 ? 62 : 64}>{icon}</Tab>)}</Tabs>
        </TabStrip>
        <Toolbar>
          <NavRow>
            <NavButton><Back /></NavButton>
            <NavButton><Forward /></NavButton>
            <NavButton><Reload /></NavButton>
            <NavButton><Home /></NavButton>
            <Omnibox><Info />localhost<Port>:3002</Port></Omnibox>
          </NavRow>
          <BookmarkRow>
            {bookmarks.map(([label, width, icon, spacing]) => (
              <Bookmark key={label} $width={width} $spacing={spacing}>{icon}{label}</Bookmark>
            ))}
          </BookmarkRow>
        </Toolbar>
        <SiteHeader>Miriam's | Todo List</SiteHeader>
        <SiteBody>Loading...</SiteBody>
        <Shelf>
          <Download $width={472} $pad={38}><Package /><FileName $gap={54} $spacing={0.65}>node-v14.16.1.pkg</FileName><Caret /></Download>
          {[0, 1, 2].map((i) => (
            <Download key={i} $width={466} $pad={36}><PngFile /><FileName $gap={33} $spacing={-0.14}>screencapture-l....png</FileName><Caret /></Download>
          ))}
          <ShelfEnd><ShowAll>Show All</ShowAll><Cross /></ShelfEnd>
        </Shelf>
      </Browser>

      <PopupShadow />
      <Popup>
        <PopupTitleBar>
          <Lights><Light $color="#ec6a5e" /><Light $color="#f4bf4f" /><Light $color="#61c554" /></Lights>
          <PopupTitle>MetaMask Notification</PopupTitle>
        </PopupTitleBar>
        <NetworkBar>
          <Network><RoundBadge $size={24} $font={19} $bg="#6a737d">?</RoundBadge>Localhost 8545</Network>
        </NetworkBar>
        <Accounts>
          <Account $pad={32} $spacing={1}><Avatar /><AccountName>Account 2</AccountName></Account>
          <Account $pad={60} $spacing={0.12} $divided><Avatar alt /><AccountName>0xE386...0A57</AccountName></Account>
          <ArrowBadge><Arrow /></ArrowBadge>
        </Accounts>
        <Summary>
          <Origin>http://localhost:3002</Origin>
          <Action>CREATE TASK</Action>
          <BigAmount><Eth w={32} h={52} />0</BigAmount>
        </Summary>
        <TabBar>
          <PopupTab $width={126} $active>DETAILS</PopupTab>
          <PopupTab $width={162}>DATA</PopupTab>
        </TabBar>
        <Details>
          <FeeRow>
            <FeeLabel $top={35}>GAS FEE</FeeLabel>
            <FeeValues>
              <Fee $color="#4d4d4d"><Eth w={22} h={36} />0.001896</Fee>
              <Conversion>No Conversion Rate Available</Conversion>
            </FeeValues>
          </FeeRow>
          <Fields>
            <div>
              <FieldHead $spacing={0.26}>Gas Price (GWEI)<RoundBadge $size={20} $font={15} $bg="#cbcbcb" $family="Liberation Serif">i</RoundBadge></FieldHead>
              <NumberField><NumberValue $spacing={0}>20</NumberValue><Stepper><Step /><Step down /></Stepper></NumberField>
            </div>
            <div>
              <FieldHead $spacing={0.69}>Gas Limit<RoundBadge $size={20} $font={15} $bg="#cbcbcb" $family="Liberation Serif">i</RoundBadge></FieldHead>
              <NumberField><NumberValue $spacing={-1.1}>94796</NumberValue><Stepper><Step /><Step down /></Stepper></NumberField>
            </div>
          </Fields>
          <TotalNote>AMOUNT + GAS FEE</TotalNote>
          <FeeRow $top={19}>
            <FeeLabel $top={15}>TOTAL</FeeLabel>
            <FeeValues>
              <Fee $color="#4a9adb"><Eth w={22} h={36} />0.001896</Fee>
              <Conversion>No Conversion Rate Available</Conversion>
            </FeeValues>
          </FeeRow>
        </Details>
        <Footer>
          <Button>Reject</Button>
          <Button $primary>Confirm</Button>
        </Footer>
      </Popup>
    </Desktop>
  );
}
